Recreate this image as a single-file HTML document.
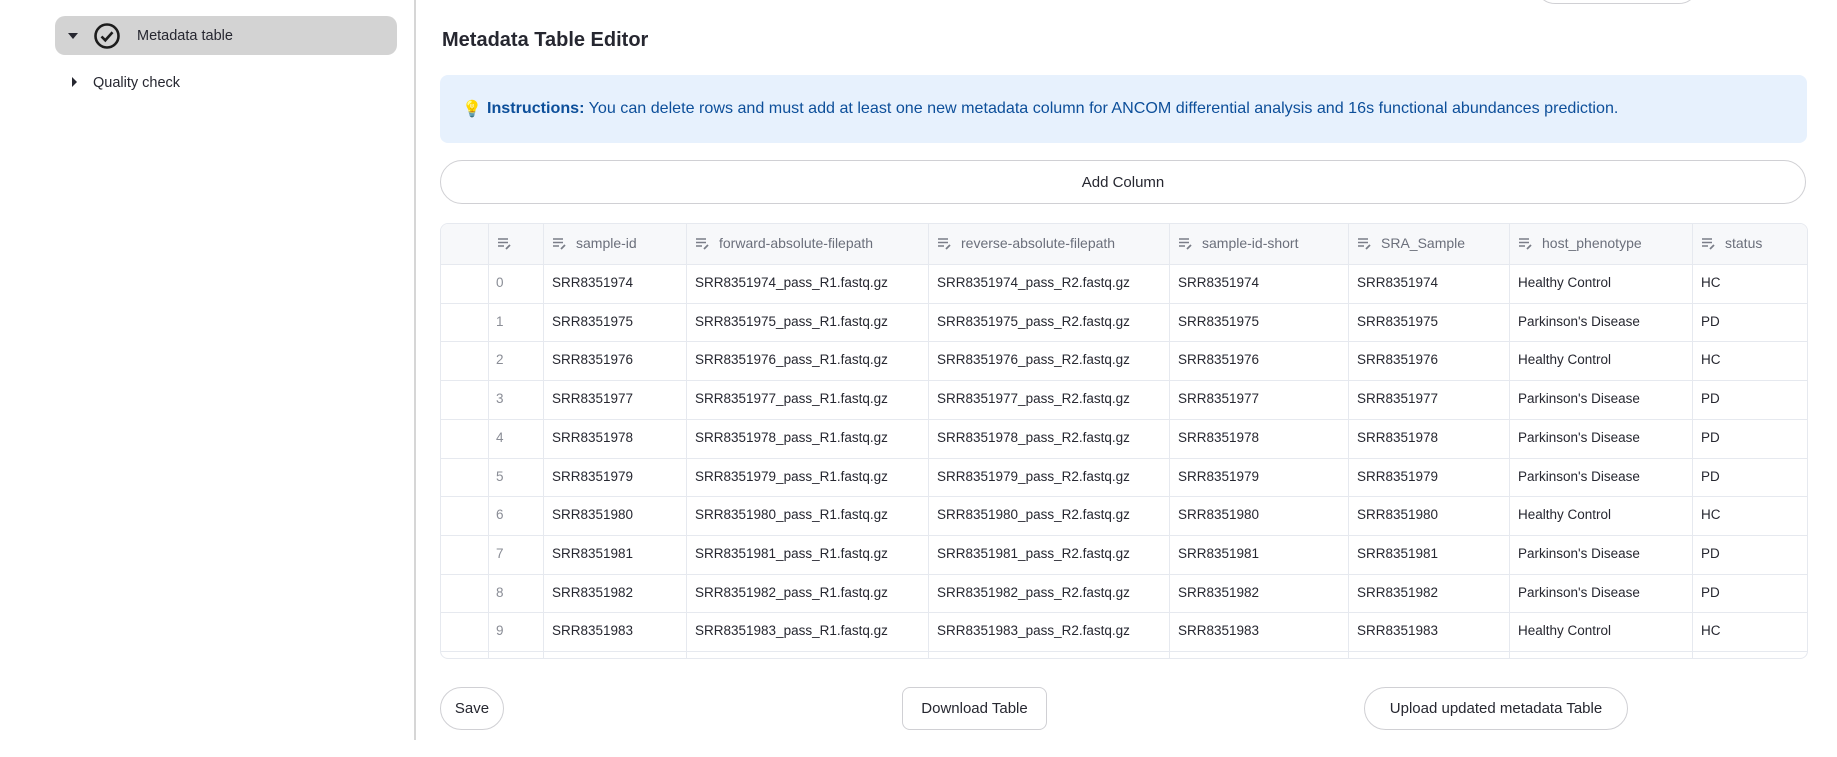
<!DOCTYPE html>
<html><head><meta charset="utf-8"><style>
body{margin:0;width:1837px;height:757px;background:#fff;font-family:"Liberation Sans",sans-serif;position:relative;overflow:hidden;color:#31333f}
.a{position:absolute}
.side{left:55px;top:16px;width:342px;height:39px;background:#d3d3d3;border-radius:10px}
.div{left:414px;top:0;width:2px;height:740px;background:#d6d6d6}
.tbl{left:440px;top:223px;width:1366px;height:434px;border:1px solid #e6e9ef;border-radius:8px;overflow:hidden}
.hdr{position:absolute;left:0;top:0;width:100%;height:40px;background:#f7f8fa;border-bottom:1px solid #e6e9ef}
.vl{position:absolute;top:0;width:1px;height:100%;background:#e6e9ef}
.hl{position:absolute;left:0;width:100%;height:1px;background:#e6e9ef}
.c{position:absolute;font-size:13.5px;white-space:nowrap;color:#262730}
.h{color:#6b6f7b;font-size:14px}
.idx{color:#8a8d96}
.btn{position:absolute;border:1.5px solid #d0d0d4;background:#fff;font-size:15px;color:#262730;display:flex;align-items:center;justify-content:center}
</style></head><body>
<div class="a side"></div>
<div class="a" style="left:68px;top:33px;width:0;height:0;border-left:5px solid transparent;border-right:5px solid transparent;border-top:6px solid #262730"></div>
<svg class="a" style="left:93px;top:22px" width="28" height="28" viewBox="0 0 28 28"><circle cx="14" cy="14" r="11.5" fill="none" stroke="#1c1c1c" stroke-width="2.6"/><path d="M8.5 14.5l3.8 3.8 7.2-8" fill="none" stroke="#1c1c1c" stroke-width="2.6"/></svg>
<div class="a" style="left:137px;top:28px;font-size:14.5px;color:#262730">Metadata table</div>
<div class="a" style="left:72px;top:77px;width:0;height:0;border-top:5px solid transparent;border-bottom:5px solid transparent;border-left:5px solid #262730"></div>
<div class="a" style="left:93px;top:75px;font-size:14.5px;color:#262730">Quality check</div>
<div class="a div"></div>
<div class="a" style="left:1535px;top:-36px;width:162px;height:38px;border:1.5px solid #d0d0d4;border-radius:20px"></div>
<div class="a" style="left:442px;top:29px;font-size:20px;font-weight:bold;color:#262730">Metadata Table Editor</div>
<div class="a" style="left:440px;top:75px;width:1367px;height:68px;background:#e7f1fd;border-radius:8px"></div>
<div class="a" style="left:462px;top:99px;font-size:16px">💡</div>
<div class="a" style="left:487px;top:99px;font-size:16.1px;color:#0d4f9a;white-space:nowrap"><b>Instructions:</b> You can delete rows and must add at least one new metadata column for ANCOM differential analysis and 16s functional abundances prediction.</div>
<div class="btn" style="left:440px;top:160px;width:1364px;height:42px;border-radius:24px">Add Column</div>
<div class="a tbl">
<div class="hdr"></div>
<div id="g"></div>
</div>
<div class="btn" style="left:440px;top:687px;width:62px;height:41px;border-radius:22px">Save</div>
<div class="btn" style="left:902px;top:687px;width:143px;height:41px;border-radius:8px">Download Table</div>
<div class="btn" style="left:1364px;top:687px;width:262px;height:41px;border-radius:22px">Upload updated metadata Table</div>
<script>
var cols=[0,47,102,245,487,728,907,1068,1251];
var heads=["","sample-id","forward-absolute-filepath","reverse-absolute-filepath","sample-id-short","SRA_Sample","host_phenotype","status"];
var ph=["Healthy Control","Parkinson's Disease","Healthy Control","Parkinson's Disease","Parkinson's Disease","Parkinson's Disease","Healthy Control","Parkinson's Disease","Parkinson's Disease","Healthy Control"];
var g=document.getElementById('g'),s='';
var ic='<svg width="16" height="14" viewBox="0 0 16 14" style="vertical-align:-2px;margin-right:8px"><path d="M1 3h10M1 6.5h10M1 10h6" stroke="#7a7d88" stroke-width="1.4"/><path d="M9 13l4-4" stroke="#7a7d88" stroke-width="1.8"/></svg>';
for(var i=1;i<cols.length;i++)s+='<div class="vl" style="left:'+cols[i]+'px"></div>';
for(var i=1;i<cols.length;i++)s+='<div class="c h" style="left:'+(cols[i]+9)+'px;top:11px">'+ic+heads[i-1]+'</div>';
for(var r=0;r<11;r++){var t=40+r*38.7;s+='<div class="hl" style="top:'+t+'px"></div>';
if(r<10){var id='SRR83519'+(74+r);var v=[r,id,id+'_pass_R1.fastq.gz',id+'_pass_R2.fastq.gz',id,id,ph[r],ph[r][0]=='H'?'HC':'PD'];
for(var i=1;i<cols.length;i++)s+='<div class="c'+(i==1?' idx':'')+'" style="left:'+(cols[i]+(i==1?8:9))+'px;top:'+(t+11)+'px">'+v[i-1]+'</div>';}}
g.innerHTML=s;
</script>
</body></html>
